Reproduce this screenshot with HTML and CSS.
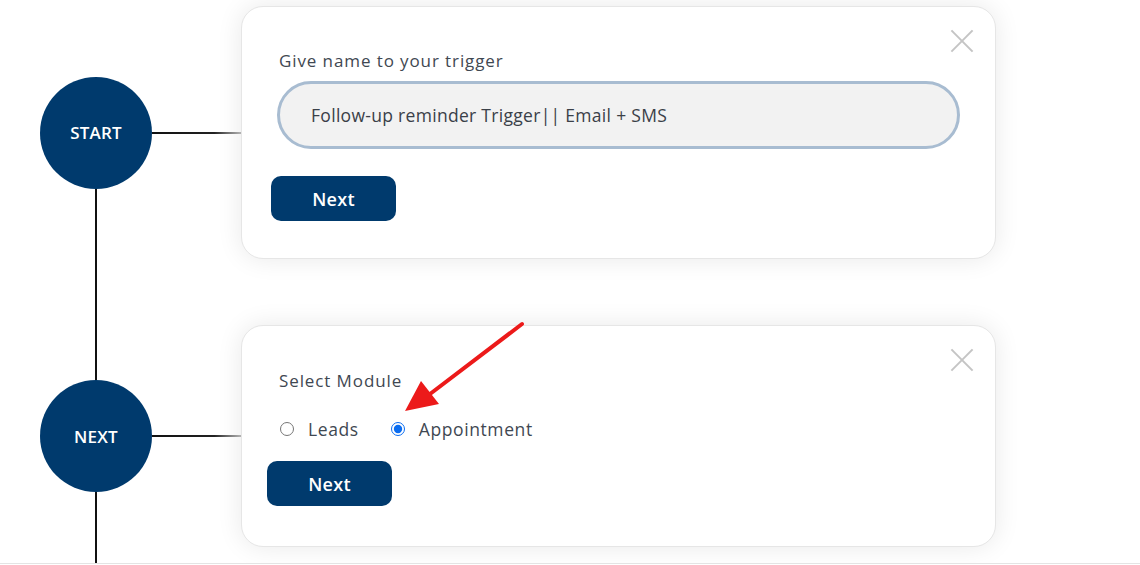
FILE: index.html
```html
<!DOCTYPE html>
<html>
<head>
<meta charset="utf-8">
<link rel="stylesheet" href="styles.css">
</head>
<body>
<div class="page">
  <div class="flow">
    <div class="spine"></div>
    <div class="step">
      <div class="node"><div class="circle">START</div><div class="link"></div></div>
      <div class="card card-name">
        <span class="close" aria-label="close"></span>
        <div class="label">Give name to your trigger</div>
        <div class="field">Follow-up reminder Trigger|| Email + SMS</div>
        <button class="btn btn-1">Next</button>
      </div>
    </div>
    <div class="step step-2">
      <div class="node"><div class="circle">NEXT</div><div class="link"></div></div>
      <div class="card card-module">
        <span class="close" aria-label="close"></span>
        <div class="label">Select Module</div>
        <div class="options">
          <label class="opt"><input type="radio" name="m"><span>Leads</span></label>
          <label class="opt"><input type="radio" name="m" checked><span>Appointment</span></label>
        </div>
        <button class="btn btn-2">Next</button>
      </div>
    </div>
    <svg class="arrow" width="140" height="110" viewBox="0 0 140 110">
      <line x1="122" y1="4" x2="30" y2="74" stroke="#ec1a1a" stroke-width="4" stroke-linecap="round"/>
      <polygon points="5,91 21,61 39,84" fill="#ec1a1a"/>
    </svg>
  </div>
</div>
</body>
</html>
```
FILE: styles.css
```css
* { box-sizing: border-box; }
html, body { margin: 0; padding: 0; background: #fff; }
body { font-family: "Open Sans", "Noto Sans", sans-serif; color: #3c4650; }
.page { height: 564px; overflow: hidden; border-bottom: 1px solid #e4e4e4; }
.flow { position: relative; padding-top: 6px; }
.spine { position: absolute; left: 95px; top: 132px; width: 2px; height: 600px; background: #111; }
.step { display: flex; align-items: center; }
.step-2 { margin-top: 66px; }
.node { width: 241px; display: flex; align-items: center; padding-left: 40px; position: relative; z-index: 1; }
.circle { width: 112px; height: 112px; border-radius: 50%; background: #003a6d; color: #fff; display: flex; align-items: center; justify-content: center; font-size: 17px; font-weight: 600; letter-spacing: 0.2px; flex: none; }
.link { flex: 1; height: 2px; background: linear-gradient(to right, #111 0%, #222 70%, #bbb 100%); }
.card { position: relative; width: 755px; background: #fff; border: 1px solid #e6e6e6; border-radius: 22px; box-shadow: 0 0 26px rgba(0,0,0,0.09); z-index: 2; }
.card-name { height: 253px; padding: 42px 35px 0 37px; }
.card-module { height: 222px; padding: 43px 35px 0 37px; }
.close { position: absolute; right: 22px; top: 23px; width: 22px; height: 22px; }
.close::before, .close::after { content: ""; position: absolute; left: -4px; top: 10px; width: 30px; height: 2px; background: #c4c4c4; }
.close::before { transform: rotate(45deg); }
.close::after { transform: rotate(-45deg); }
.label { font-size: 17px; line-height: 23px; color: #3f4852; letter-spacing: 0.9px; }
.field { margin-top: 9px; margin-left: -2px; height: 68px; border: 3px solid #a8bcd1; border-radius: 34px; background: #f2f2f2; padding-left: 31px; display: flex; align-items: center; font-size: 17.5px; color: #3a4048; letter-spacing: 0.3px; }
.btn { display: block; width: 125px; height: 45px; border: none; border-radius: 10px; background: #003a6d; color: #fff; font-family: inherit; font-size: 18px; font-weight: 600; letter-spacing: 0.3px; padding: 0; }
.btn-1 { margin: 27px 0 0 -8px; }
.btn-2 { margin: 21px 0 0 -12px; }
.options { display: flex; align-items: center; margin-top: 26px; height: 22px; }
.opt { display: flex; align-items: center; font-size: 17.5px; color: #3f4852; letter-spacing: 0.6px; margin-right: 31px; }
.opt input { margin: 0 14px 0 1px; width: 14px; height: 14px; accent-color: #0a6cf0; }
.arrow { position: absolute; left: 400px; top: 320px; z-index: 3; }
```
